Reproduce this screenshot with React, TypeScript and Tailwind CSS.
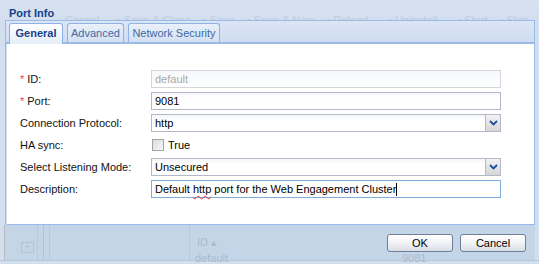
import React from "react";

const font = "font-['Liberation_Sans',Arial,sans-serif]";

function Label({ req, children }: { req?: boolean; children: React.ReactNode }) {
  return (
    <div className="w-[144px] shrink-0 text-[11px] text-[#111] leading-[18px] pl-[13px]">
      {req && <span className="text-[#e34a3a] mr-[3px]">*</span>}
      {children}
    </div>
  );
}

function Chevron() {
  return (
    <svg width="9" height="6" viewBox="0 0 9 6">
      <path d="M1 1 L4.5 4.5 L8 1" stroke="#1f4d9a" strokeWidth="1.8" fill="none" />
    </svg>
  );
}

function Combo({ value }: { value: string }) {
  return (
    <div className="flex w-[350px] h-[18px]">
      <div className="flex-1 border border-[#b5b8c8] border-r-0 bg-gradient-to-b from-[#f4f6f9] to-white to-[30%] px-[3px] text-[11px] leading-[16px] text-black">
        {value}
      </div>
      <div className="w-[16px] border border-[#b5b8c8] bg-gradient-to-b from-[#f2f2f2] to-[#d6d6d6] flex items-center justify-center">
        <Chevron />
      </div>
    </div>
  );
}

export default function App() {
  const faded = "text-[#bcc8d9]";
  return (
    <div className={`${font} relative w-[539px] h-[264px] overflow-hidden bg-[#d3deee]`}>
      {/* faded toolbar behind header */}
      <div className={`absolute left-[55px] top-[12px] flex gap-[12px] text-[11px] ${faded} whitespace-nowrap`}>
        <span className="ml-[10px]">Cancel</span>
        <span className="ml-[6px]">▪ Save &amp; Close</span>
        <span>▪ Save</span>
        <span>▪ Save &amp; New</span>
        <span>▫ Reload</span>
        <span className="ml-[8px]">▫ Uninstall</span>
        <span className="ml-[8px]">▪ Start</span>
        <span>▫ Stop</span>
      </div>
      <div className="relative flex flex-col h-full">
        {/* header */}
        <div className="h-[20px] pl-[9px] pt-[6px] text-[11px] font-bold text-[#15428b] leading-[14px] bg-gradient-to-b from-[#d9e2f1]/70 to-transparent">
          Port Info
        </div>
        {/* dialog body frame */}
        <div className="flex flex-col ml-[5px] mr-[4px] border-l border-r border-[#99bbe8]">
          {/* tab strip */}
          <div className="h-[24px] border-t border-[#99bbe8] bg-gradient-to-b from-[#dae6f5] to-[#cfdcf1] flex items-end pl-[3px] gap-[4px] border-b-[2px] border-b-[#99bbe8] relative">
            <div className="h-[21px] w-[54px] rounded-t-[3px] border border-b-0 border-[#8db2e3] bg-gradient-to-b from-white to-[#e4edf8] text-[11px] font-bold text-[#15428b] flex items-center justify-center -mb-[2px] pb-[2px]">
              General
            </div>
            <div className="h-[19px] w-[57px] rounded-t-[3px] border border-b-0 border-[#8db2e3] bg-gradient-to-b from-[#e9f0fa] to-[#d3e0f3] text-[11px] text-[#416aa3] flex items-center justify-center">
              Advanced
            </div>
            <div className="h-[19px] w-[92px] rounded-t-[3px] border border-b-0 border-[#8db2e3] bg-gradient-to-b from-[#e9f0fa] to-[#d3e0f3] text-[11px] text-[#416aa3] flex items-center justify-center">
              Network Security
            </div>
          </div>
          {/* form */}
          <div className="bg-white h-[181px] ml-[1px] border-b border-[#99bbe8] pt-[26px] flex flex-col gap-[4px]">
            <div className="flex items-center">
              <Label req>ID:</Label>
              <div className="w-[350px] h-[18px] border border-[#d4d6df] bg-gradient-to-b from-[#f7f8fa] to-white px-[3px] text-[11px] leading-[16px] text-[#a9a9a9]">
                default
              </div>
            </div>
            <div className="flex items-center">
              <Label req>Port:</Label>
              <div className="w-[350px] h-[18px] border border-[#b5b8c8] bg-gradient-to-b from-[#f4f6f9] to-white to-[30%] px-[3px] text-[11px] leading-[16px] text-black">
                9081
              </div>
            </div>
            <div className="flex items-center">
              <Label>Connection Protocol:</Label>
              <Combo value="http" />
            </div>
            <div className="flex items-center">
              <Label>HA sync:</Label>
              <div className="flex items-center h-[18px] pl-[1px]">
                <div className="w-[12px] h-[12px] border border-[#a4a4a4] bg-gradient-to-br from-[#dcdcdc] to-[#f8f8f8]" />
                <span className="ml-[4px] text-[11px] text-black">True</span>
              </div>
            </div>
            <div className="flex items-center">
              <Label>Select Listening Mode:</Label>
              <Combo value="Unsecured" />
            </div>
            <div className="flex items-center">
              <Label>Description:</Label>
              <div className="w-[350px] h-[18px] border border-[#7eadd9] bg-white px-[3px] text-[11px] leading-[16px] text-black flex items-center">
                <span className="whitespace-pre">Default </span>
                <span className="underline decoration-wavy decoration-[#e03030] decoration-1 underline-offset-2">http</span>
                <span className="whitespace-pre"> port for the Web Engagement Cluster</span>
                <span className="w-[1px] h-[13px] bg-black" />
              </div>
            </div>
          </div>
        </div>
        {/* footer */}
        <div className="relative h-[35px] bg-[#c4d5e7] ml-[4px] mr-[4px] border-l border-[#b4a8a8]/60">
          <div className="absolute left-[32px] top-0 bottom-0 w-px bg-[#b6c9dd]" />
          <div className="absolute left-[38px] top-0 bottom-0 w-px bg-[#c9b9cf]" />
          <div className="absolute left-[44px] top-0 bottom-0 w-px bg-[#b6c9dd]" />
          <div className="absolute left-[184px] top-0 bottom-0 w-px bg-[#b6c9dd]" />
          <div className="absolute left-[16px] top-[17px] w-[13px] h-[11px] border border-[#b2c6da] text-[9px] leading-[9px] text-[#a9bed3] text-center">+</div>
          <div className={`absolute left-[192px] top-[9px] text-[11px] text-[#a9bccf]`}>ID ▴</div>
          <div className={`absolute left-[190px] top-[27px] text-[11px] leading-[12px] text-[#a9bccf]`}>default</div>
          <div className={`absolute left-[397px] top-[27px] text-[11px] leading-[12px] text-[#a9bccf]`}>9081</div>
          <div className="absolute right-[9px] top-[9px] flex gap-[7px]">
            <div className="w-[66px] h-[18px] rounded-[3px] border border-[#6f7f98] bg-gradient-to-b from-white via-[#f1f3f6] to-[#d9dee6] text-[11px] text-black flex items-center justify-center">
              OK
            </div>
            <div className="w-[66px] h-[18px] rounded-[3px] border border-[#6f7f98] bg-gradient-to-b from-white via-[#f1f3f6] to-[#d9dee6] text-[11px] text-black flex items-center justify-center">
              Cancel
            </div>
          </div>
        </div>
        <div className="flex-1 bg-[#d2deec] border-t border-[#b6c8dc]" />
      </div>
    </div>
  );
}
